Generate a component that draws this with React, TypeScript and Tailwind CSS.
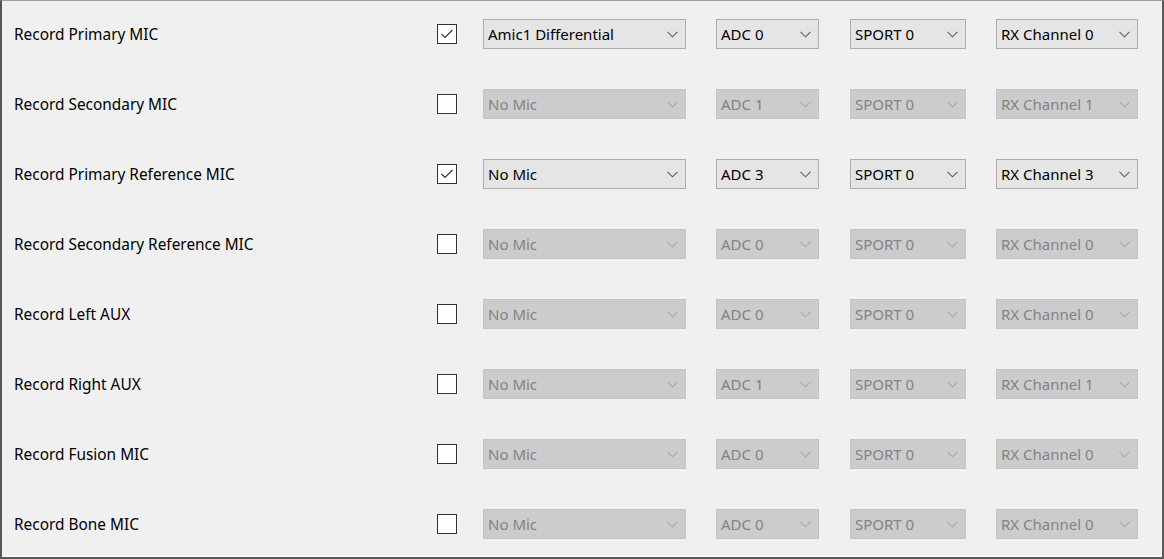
import React from "react";

type Row = {
  label: string;
  checked: boolean;
  mic: string;
  adc: string;
  sport: string;
  rx: string;
};

const rows: Row[] = [
  { label: "Record Primary MIC", checked: true, mic: "Amic1 Differential", adc: "ADC 0", sport: "SPORT 0", rx: "RX Channel 0" },
  { label: "Record Secondary MIC", checked: false, mic: "No Mic", adc: "ADC 1", sport: "SPORT 0", rx: "RX Channel 1" },
  { label: "Record Primary Reference MIC", checked: true, mic: "No Mic", adc: "ADC 3", sport: "SPORT 0", rx: "RX Channel 3" },
  { label: "Record Secondary Reference MIC", checked: false, mic: "No Mic", adc: "ADC 0", sport: "SPORT 0", rx: "RX Channel 0" },
  { label: "Record Left AUX", checked: false, mic: "No Mic", adc: "ADC 0", sport: "SPORT 0", rx: "RX Channel 0" },
  { label: "Record Right AUX", checked: false, mic: "No Mic", adc: "ADC 1", sport: "SPORT 0", rx: "RX Channel 1" },
  { label: "Record Fusion MIC", checked: false, mic: "No Mic", adc: "ADC 0", sport: "SPORT 0", rx: "RX Channel 0" },
  { label: "Record Bone MIC", checked: false, mic: "No Mic", adc: "ADC 0", sport: "SPORT 0", rx: "RX Channel 0" },
];

function Chevron({ enabled }: { enabled: boolean }) {
  return (
    <svg width="11" height="7" viewBox="0 0 11 7" className="shrink-0">
      <path
        d="M0.5 0.8 L5.5 5.8 L10.5 0.8"
        fill="none"
        stroke={enabled ? "#606060" : "#a8a8a8"}
        strokeWidth="1.1"
      />
    </svg>
  );
}

function Combo({ value, enabled, width }: { value: string; enabled: boolean; width: string }) {
  return (
    <div
      className={
        "flex h-[30px] items-center justify-between border pl-[4px] pr-[7px] " +
        width +
        (enabled
          ? " border-[#adadad] bg-[#e5e5e5] text-black"
          : " border-[#c4c4c4] bg-[#cccccc] text-[#838383]")
      }
    >
      <span className="whitespace-nowrap leading-none">{value}</span>
      <Chevron enabled={enabled} />
    </div>
  );
}

function CheckBox({ checked }: { checked: boolean }) {
  return (
    <div className="flex h-[20px] w-[20px] items-center justify-center border border-[#333333] bg-white">
      {checked && (
        <svg width="14" height="12" viewBox="0 0 14 12">
          <path d="M1.5 6 L5 9.5 L12.5 2" fill="none" stroke="#333333" strokeWidth="1.2" />
        </svg>
      )}
    </div>
  );
}

export default function App() {
  return (
    <div
      className="relative h-[559px] w-[1164px] overflow-hidden bg-[#f0f0f0] text-[15px]"
      style={{ fontFamily: '"Noto Sans", "Liberation Sans", sans-serif' }}
    >
      <div className="flex h-full w-full flex-col border-l-2 border-r-2 border-t border-b-2 border-l-[#555555] border-r-[#5a5a5a] border-t-[#a0a0a0] border-b-[#5a5a5a]">
        <div className="flex h-full w-full flex-col gap-[40px] border-b border-b-white pl-[12px] pt-[18px]">
          {rows.map((r) => (
            <div key={r.label} className="flex h-[30px] items-center">
              <div className="w-[423px] whitespace-nowrap pt-[2px] text-[15.4px] leading-none text-black">{r.label}</div>
              <div className="w-[46px]">
                <CheckBox checked={r.checked} />
              </div>
              <Combo value={r.mic} enabled={r.checked} width="w-[203px]" />
              <div className="w-[30px]" />
              <Combo value={r.adc} enabled={r.checked} width="w-[103px]" />
              <div className="w-[31px]" />
              <Combo value={r.sport} enabled={r.checked} width="w-[116px]" />
              <div className="w-[30px]" />
              <Combo value={r.rx} enabled={r.checked} width="w-[142px]" />
            </div>
          ))}
        </div>
      </div>
    </div>
  );
}
